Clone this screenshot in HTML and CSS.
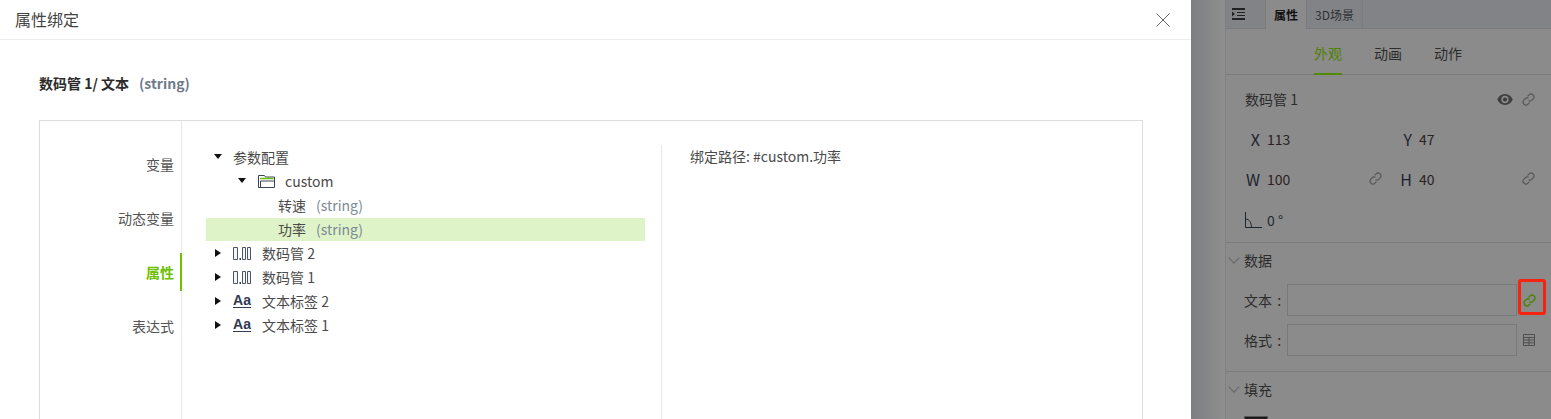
FILE: index.html
```html
<!DOCTYPE html>
<html lang="en">
<head>
    <meta charset="UTF-8">
    <meta name="viewport" content="width=device-width, initial-scale=1.0">
    <title>属性绑定</title>
    <link rel="stylesheet" href="styles.css">
</head>
<body>
    <svg class="defs" width="0" height="0">
        <symbol id="link" viewBox="0 0 14 14">
            <path d="M6 3.600 7.900 1.800a2.600 2.600 0 0 1 3.700 0l.6.6a2.600 2.600 0 0 1 0 3.700L10.400 8a2.600 2.600 0 0 1-3.400.2" fill="none" stroke="currentColor"/>
            <path d="M8 10.400 6.100 12.200a2.600 2.600 0 0 1-3.700 0l-.6-.6a2.600 2.600 0 0 1 0-3.700L3.600 6A2.600 2.600 0 0 1 7 5.800" fill="none" stroke="currentColor"/>
        </symbol>
        <symbol id="digits" viewBox="0 0 18 13">
            <path d="M.5.500h4v12h-4zM9.500.500h3v12h-3zM14.500.500h3v12h-3z" fill="#f4f5f7" stroke="#4a5568"/>
            <path d="M6.500 11h1.500v2H6.500z" fill="#3a4456"/>
        </symbol>
    </svg>

    <div class="app">
        <div class="modal">
            <div class="modal-header">
                <span>属性绑定</span>
                <svg class="close" width="14" height="14" viewBox="0 0 14 14"><path d="M.5.500l13 13M13.500.500l-13 13" stroke="#666" fill="none"/></svg>
            </div>
            <div class="modal-body">
                <div class="field-title">数码管 1/ 文本<span class="field-type">(string)</span></div>
                <div class="bind-box">
                    <div class="bind-menu">
                        <div class="menu-item">变量</div>
                        <div class="menu-item">动态变量</div>
                        <div class="menu-item active">属性</div>
                        <div class="menu-item">表达式</div>
                    </div>
                    <div class="tree">
                        <div class="tree-row level-0"><i class="caret-down"></i><span class="label">参数配置</span></div>
                        <div class="tree-row level-1"><i class="caret-down"></i>
                            <svg class="folder" width="17" height="14" viewBox="0 0 17 14">
                                <path d="M.5 13.500V1.500h6l1 1.500h9v10.500z" fill="#fff" stroke="#3a4456"/>
                                <path d="M2 4.500h13.500" stroke="#66c000" stroke-width="1.500"/>
                                <path d="M2.500 13V7h14" fill="none" stroke="#3a4456"/>
                            </svg>
                            <span class="label folder-label">custom</span>
                        </div>
                        <div class="tree-row leaf">转速<span class="row-type">(string)</span></div>
                        <div class="tree-row leaf selected">功率<span class="row-type">(string)</span></div>
                        <div class="tree-row level-0"><i class="caret-right"></i><svg class="digits" width="18" height="13"><use href="#digits"/></svg><span class="label">数码管 2</span></div>
                        <div class="tree-row level-0"><i class="caret-right"></i><svg class="digits" width="18" height="13"><use href="#digits"/></svg><span class="label">数码管 1</span></div>
                        <div class="tree-row level-0"><i class="caret-right"></i><span class="aa">Aa</span><span class="label">文本标签 2</span></div>
                        <div class="tree-row level-0"><i class="caret-right"></i><span class="aa">Aa</span><span class="label">文本标签 1</span></div>
                    </div>
                    <div class="bind-path">绑定路径: #custom.功率</div>
                </div>
            </div>
        </div>

        <div class="side-strip"></div>

        <div class="panel">
            <div class="panel-tabs">
                <div class="tab-icon">
                    <svg width="13" height="12" viewBox="0 0 13 12"><path d="M0 1h13M0 11h13" stroke="#222" stroke-width="2" fill="none"/><path d="M5 4.500h8M5 7.500h8" stroke="#222" fill="none"/><path d="M0 3.500l3 2.500L0 8.500z" fill="#222"/></svg>
                </div>
                <div class="tab active">属性</div>
                <div class="tab">3D场景</div>
            </div>
            <div class="sub-tabs">
                <div class="sub-tab active">外观</div>
                <div class="sub-tab">动画</div>
                <div class="sub-tab">动作</div>
            </div>
            <div class="section basics">
                <div class="name-row">
                    <span>数码管 1</span>
                    <svg class="eye" width="16" height="11" viewBox="0 0 17 12"><path d="M8.500 0C4.600 0 1.600 2.500 0 6c1.600 3.500 4.600 6 8.500 6S15.400 9.500 17 6c-1.600-3.500-4.600-6-8.500-6zm0 10a4 4 0 1 1 0-8 4 4 0 0 1 0 8zm0-6.300a2.300 2.300 0 1 0 0 4.600 2.300 2.300 0 0 0 0-4.600z" fill="#3f3f3f"/></svg>
                    <svg class="link" width="13" height="13"><use href="#link"/></svg>
                </div>
                <div class="xywh">
                    <div class="coord"><b class="axis">X</b><span>113</span></div>
                    <div class="coord"><b class="axis">Y</b><span>47</span></div>
                    <div class="coord"><b class="axis">W</b><span>100</span><svg class="link" width="13" height="13"><use href="#link"/></svg></div>
                    <div class="coord"><b class="axis">H</b><span>40</span><svg class="link" width="13" height="13"><use href="#link"/></svg></div>
                </div>
                <div class="angle-row">
                    <svg width="17" height="16" viewBox="0 0 17 16"><path d="M.5 0v15.500H17M.5 7c4 0 6 4 6 8.500" fill="none" stroke="#1d2430"/></svg>
                    <span>0 °</span>
                </div>
            </div>
            <div class="section data">
                <div class="section-title"><i class="chevron"></i>数据</div>
                <div class="form-row">
                    <label>文本 :</label>
                    <div class="input"></div>
                    <svg class="link bound" width="13" height="13"><use href="#link"/></svg>
                    <div class="highlight"></div>
                </div>
                <div class="form-row">
                    <label>格式 :</label>
                    <div class="input"></div>
                    <svg class="table-icon" width="12" height="12" viewBox="0 0 12 12"><path d="M.5.500h11v11H.5zM.5 3.500h11M.5 6h11M.5 8.800h11M6 3.500v8" fill="none" stroke="#4f4f4f"/></svg>
                </div>
            </div>
            <div class="section fill">
                <div class="section-title"><i class="chevron"></i>填充</div>
                <div class="swatch"></div>
            </div>
        </div>
    </div>
</body>
</html>
```

FILE: styles.css
```css
* {
    box-sizing: border-box;
}

html, body {
    margin: 0;
    height: 100%;
    overflow: hidden;
}

body {
    font-family: "Noto Sans CJK SC", "Noto Sans", sans-serif;
    font-size: 14px;
    color: #4a4a4a;
    background: #fff;
}

.defs {
    display: block;
    height: 0;
}

.app {
    display: flex;
    height: 419px;
    overflow: hidden;
}

/* modal */
.modal {
    width: 1191px;
    flex: none;
    background: #fff;
}

.modal-header {
    height: 40px;
    padding: 0 21px 0 15px;
    border-bottom: 1px solid #eeeeee;
    display: flex;
    align-items: center;
    justify-content: space-between;
    font-size: 16px;
    line-height: 39px;
    color: #444;
}

.modal-body {
    padding: 0 48px 0 39px;
}

.field-title {
    height: 80px;
    padding-top: 32px;
    font-weight: 700;
    line-height: 22px;
    color: #2b2b2b;
}

.field-type {
    margin-left: 10px;
    color: #6f7b8a;
}

.bind-box {
    display: flex;
    height: 320px;
    border: 1px solid #dddddd;
}

.bind-menu {
    width: 142px;
    flex: none;
    border-right: 1px solid #e8e8e8;
    padding-top: 24px;
    display: flex;
    flex-direction: column;
    gap: 16px;
}

.menu-item {
    height: 38px;
    line-height: 38px;
    padding-right: 8px;
    margin-right: -1px;
    text-align: right;
    color: #555;
}

.menu-item.active {
    color: #6cc000;
    font-weight: 700;
    border-right: 2px solid #6cc000;
    padding-right: 6px;
}

.tree {
    width: 480px;
    flex: none;
    margin-top: 24px;
    padding: 1px 16px 0 24px;
    border-right: 1px solid #e8e8e8;
}

.tree-row {
    height: 24px;
    padding-bottom: 2px;
    display: flex;
    align-items: center;
    line-height: 22px;
    color: #4a4a4a;
}

.level-0 {
    padding-left: 8px;
}

.level-1 {
    padding-left: 32px;
}

.leaf {
    padding-left: 72px;
}

.selected {
    background: #dff3c8;
    height: 23px;
    padding-bottom: 1px;
    margin-bottom: 1px;
}

.row-type {
    margin-left: 10px;
    color: #7c8a96;
}

.caret-down {
    width: 0;
    height: 0;
    border-left: 4.500px solid transparent;
    border-right: 4.500px solid transparent;
    border-top: 5px solid #111;
    margin-top: -2px;
}

.caret-right {
    width: 0;
    height: 0;
    margin-left: 1px;
    margin-right: 1px;
    border-top: 4.500px solid transparent;
    border-bottom: 4.500px solid transparent;
    border-left: 6px solid #111;
}

.label {
    margin-left: 11px;
}

.folder {
    margin-left: 12px;
}

.folder-label {
    margin-left: 10px;
}

.digits {
    margin-left: 11px;
}

.aa {
    width: 18px;
    margin-left: 11px;
    margin-top: -2px;
    border-bottom: 1.500px solid #2f3a52;
    font-family: "Liberation Sans", sans-serif;
    font-weight: 700;
    font-size: 14px;
    line-height: 14px;
    color: #2f3a52;
    text-align: center;
}

.bind-path {
    padding: 23px 0 0 28px;
    line-height: 24px;
    color: #4a4a4a;
}

/* dimmed property panel */
.side-strip {
    width: 35px;
    flex: none;
    background: linear-gradient(to right, #7d7e80, #8f8f8f);
    border-right: 1px solid #7e7f80;
}

.panel {
    flex: 1;
    background: #8b8b8b;
    color: #222831;
    min-width: 0;
}

.panel-tabs {
    height: 29px;
    display: flex;
    background: #828386;
    border-bottom: 1px solid #7b7b7b;
}

.tab-icon {
    width: 40px;
    display: flex;
    align-items: center;
    padding-left: 6px;
    border-right: 1px solid #7b7b7b;
}

.tab {
    height: 28px;
    padding: 1px 8px 0;
    line-height: 28px;
    font-size: 12px;
    color: #2f3136;
    border-right: 1px solid #7b7b7b;
}

.tab.active {
    width: 41px;
    height: 29px;
    background: #8b8b8b;
    font-weight: 700;
    color: #111;
}

.sub-tabs {
    height: 46px;
    display: flex;
    gap: 32px;
    padding-left: 88px;
    border-bottom: 1px solid #7b7b7b;
}

.sub-tab {
    height: 46px;
    line-height: 48px;
    color: #2c2c2c;
}

.sub-tab.active {
    color: #4f8000;
    border-bottom: 2px solid #4f8a00;
}

.section {
    border-bottom: 1px solid #7b7b7b;
}

.basics {
    height: 168px;
}

.name-row {
    display: flex;
    align-items: center;
    height: 44px;
    padding: 4px 16px 0 19px;
    color: #2c2c2c;
}

.name-row span {
    flex: 1;
}

.eye {
    margin-right: 9px;
}

.link {
    color: #555;
    stroke-width: 1.300;
}

.xywh {
    display: grid;
    grid-template-columns: 152px 153px;
    grid-auto-rows: 40px;
    padding-left: 19px;
}

.coord {
    display: flex;
    align-items: center;
    padding-right: 15px;
}

.coord .link {
    margin-left: auto;
    margin-top: -1px;
}

.axis {
    width: 22px;
    padding-right: 7px;
    text-align: right;
    font-weight: 400;
    font-size: 16px;
    color: #1d2430;
}

.coord span {
    color: #2a1f22;
}

.angle-row {
    display: flex;
    align-items: center;
    gap: 5px;
    height: 40px;
    margin-top: 1px;
    padding-left: 19px;
}

.data {
    height: 129px;
}

.data .section-title {
    margin-bottom: 7px;
}

.section-title {
    height: 34px;
    display: flex;
    align-items: center;
    padding-left: 18px;
    color: #2c2c2c;
    position: relative;
}

.chevron {
    position: absolute;
    left: 4px;
    top: 11px;
    width: 8px;
    height: 8px;
    border-right: 1px solid #666;
    border-bottom: 1px solid #666;
    transform: rotate(45deg);
}

.form-row {
    display: flex;
    align-items: center;
    height: 32px;
    margin-bottom: 8px;
    padding-left: 18px;
    position: relative;
}

.form-row label {
    width: 43px;
    flex: none;
    word-spacing: 2px;
    color: #2c2c2c;
}

.input {
    width: 230px;
    height: 32px;
    border: 1px solid #7a7a7a;
}

.link.bound {
    margin-left: 6px;
    color: #4a8200;
    stroke-width: 1.500;
}

.highlight {
    position: absolute;
    left: 292px;
    top: -5px;
    width: 28px;
    height: 36px;
    border: 3px solid #f5230f;
    border-radius: 3px;
}

.table-icon {
    margin-left: 6px;
}

.swatch {
    width: 24px;
    height: 12px;
    margin: 10px 0 0 18px;
    background: #1c1c1c;
    border: 1px solid #555;
}
```
